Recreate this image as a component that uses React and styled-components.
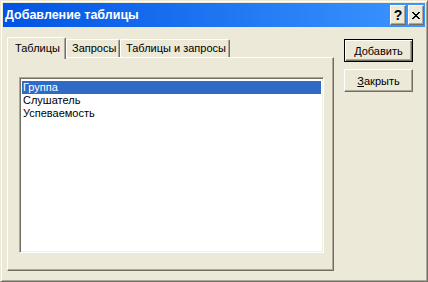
import React from "react";
import styled, { createGlobalStyle } from "styled-components";

const GlobalStyle = createGlobalStyle`
    html, body {
        margin: 0;
        padding: 0;
        background: #ECE9D8;
    }
    body {
        font-family: "Liberation Sans", Arial, sans-serif;
        font-size: 11px;
    }
`

const Window = styled.div`
    width: 428px;
    height: 282px;
    box-sizing: border-box;
    background: #ECE9D8;
    border: 1px solid;
    border-color: #ECE9D8 #716F64 #716F64 #ECE9D8;
    box-shadow: inset 1px 1px #FFFFFF, inset -1px -1px #ACA899;
    padding: 2px;
    display: flex;
    flex-direction: column;
`

const TitleBar = styled.div`
    height: 24px;
    flex: none;
    display: flex;
    align-items: center;
    justify-content: space-between;
    padding: 0 1px 0 2px;
    background: linear-gradient(to right, #0054E3, #3D95FF);
`

const Title = styled.div`
    color: #FFFFFF;
    font-weight: bold;
    font-size: 12.5px;
`

const TitleButtons = styled.div`
    display: flex;
    gap: 2px;
`

const CaptionButton = styled.div`
    width: 16px;
    height: 20px;
    box-sizing: border-box;
    background: #ECE9D8;
    border: 1px solid;
    border-color: #FFFFFF #716F64 #716F64 #FFFFFF;
    box-shadow: inset -1px -1px #ACA899;
    display: flex;
    align-items: center;
    justify-content: center;
    font-weight: bold;
    font-size: 14px;
    color: #000000;
`

const Body = styled.div`
    flex: 1;
    display: flex;
    gap: 10px;
    padding: 10px 10px 8px 4px;
`

const TabControl = styled.div`
    width: 327px;
    display: flex;
    flex-direction: column;
`

const TabStrip = styled.div`
    height: 20px;
    display: flex;
    align-items: flex-end;
    position: relative;
    z-index: 1;
`

const Tab = styled.div`
    box-sizing: border-box;
    width: ${p => p.$w}px;
    height: ${p => (p.$active ? 22 : 18)}px;
    margin-bottom: ${p => (p.$active ? -2 : 0)}px;
    background: #ECE9D8;
    border-top: 1px solid #FFFFFF;
    border-left: 1px solid #FFFFFF;
    border-right: 1px solid #716F64;
    box-shadow: inset -1px 0 #ACA899;
    border-radius: 2px 2px 0 0;
    padding: ${p => (p.$active ? "4px 0 0 7px" : "2px 0 0 5px")};
    color: #000000;
    white-space: nowrap;
`

const TabPanel = styled.div`
    flex: 1;
    box-sizing: border-box;
    border: 1px solid;
    border-color: #FFFFFF #716F64 #716F64 #FFFFFF;
    box-shadow: inset -1px -1px #ACA899;
    padding: 19px 9px 17px 11px;
    display: flex;
`

const ListBox = styled.div`
    flex: 1;
    box-sizing: border-box;
    background: #FFFFFF;
    border: 1px solid;
    border-color: #ACA899 #FFFFFF #FFFFFF #ACA899;
    box-shadow: inset 1px 1px #716F64, inset -1px -1px #F1EFE2;
    padding: 3px 2px;
`

const ListItem = styled.div`
    height: 13px;
    line-height: 13px;
    padding-left: 1px;
    background: ${p => (p.$selected ? "#316AC5" : "transparent")};
    color: ${p => (p.$selected ? "#FFFFFF" : "#000000")};
`

const ButtonColumn = styled.div`
    display: flex;
    flex-direction: column;
    gap: 7px;
    padding-top: 2px;
`

const Button = styled.div`
    width: 69px;
    height: 23px;
    box-sizing: border-box;
    background: #ECE9D8;
    border: 1px solid;
    border-color: ${p => (p.$default ? "#000000" : "#FFFFFF #716F64 #716F64 #FFFFFF")};
    box-shadow: ${p => (p.$default
        ? "inset 1px 1px #FFFFFF, inset -1px -1px #716F64, inset -2px -2px #ACA899"
        : "inset -1px -1px #ACA899")};
    display: flex;
    align-items: center;
    justify-content: center;
    color: #000000;
    font-size: 11px;
`

const Mnemonic = styled.span`
    text-decoration: underline;
`

const CloseGlyph = () => (
    <svg width="8" height="7" viewBox="0 0 8 7">
        <path d="M0 0h2v1h1v1h2V1h1V0h2v1H7v1H6v1H5v1h1v1h1v1h1v1H6V6H5V5H3v1H2v1H0V6h1V5h1V4h1V3H2V2H1V1H0z" fill="#000" />
    </svg>
)

const App = () => {
    const items = ["Группа", "Слушатель", "Успеваемость"];

    return (
        <>
            <GlobalStyle />
            <Window>
                <TitleBar>
                    <Title>Добавление таблицы</Title>
                    <TitleButtons>
                        <CaptionButton>?</CaptionButton>
                        <CaptionButton><CloseGlyph /></CaptionButton>
                    </TitleButtons>
                </TitleBar>
                <Body>
                    <TabControl>
                        <TabStrip>
                            <Tab $active $w={59}>Таблицы</Tab>
                            <Tab $w={54}>Запросы</Tab>
                            <Tab $w={110}>Таблицы и запросы</Tab>
                        </TabStrip>
                        <TabPanel>
                            <ListBox>
                                {items.map((it, i) => (
                                    <ListItem key={it} $selected={i === 0}>{it}</ListItem>
                                ))}
                            </ListBox>
                        </TabPanel>
                    </TabControl>
                    <ButtonColumn>
                        <Button $default><Mnemonic>Д</Mnemonic>обавить</Button>
                        <Button><Mnemonic>З</Mnemonic>акрыть</Button>
                    </ButtonColumn>
                </Body>
            </Window>
        </>
    );
}

export default App;
